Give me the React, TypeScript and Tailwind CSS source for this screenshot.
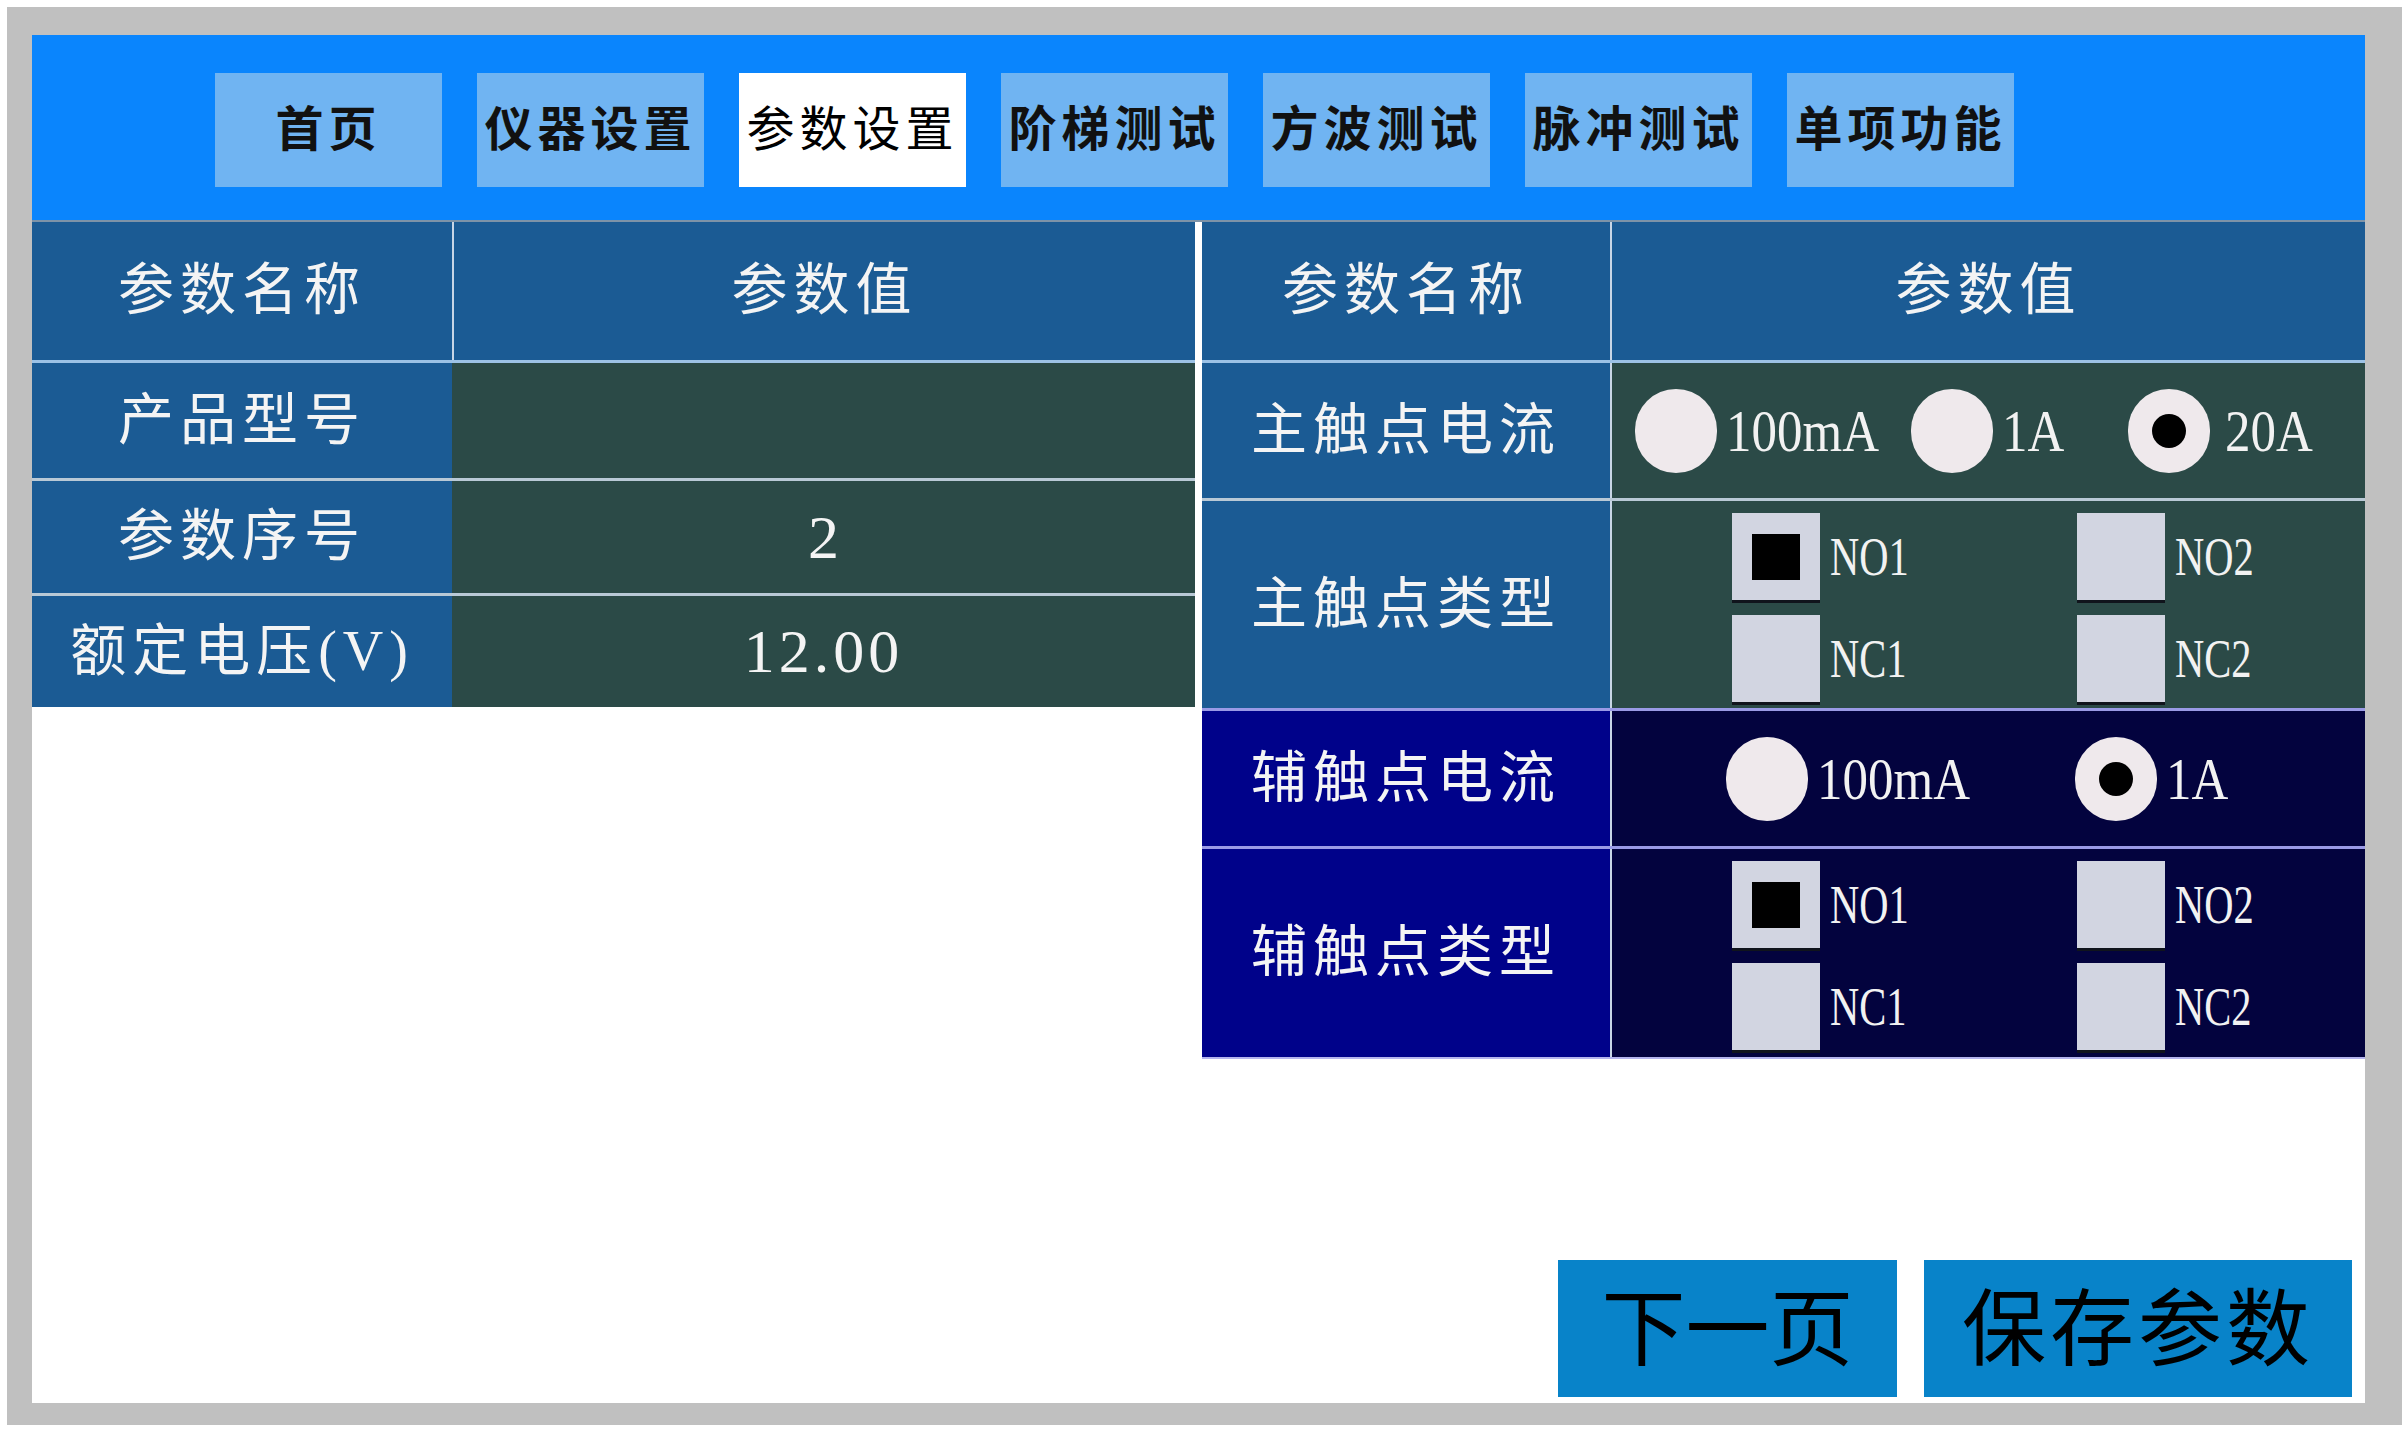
import type { ReactNode } from 'react'

const tabs = ['首页', '仪器设置', '参数设置', '阶梯测试', '方波测试', '脉冲测试', '单项功能']

function Radio({ checked }: { checked?: boolean }) {
  return (
    <span className="flex h-[84px] w-[82px] shrink-0 items-center justify-center rounded-full bg-[#efe9ec]">
      {checked && <span className="h-[34px] w-[34px] rounded-full bg-black" />}
    </span>
  )
}

function Check({ checked }: { checked?: boolean }) {
  return (
    <span className="flex h-[87px] w-[88px] shrink-0 items-center justify-center bg-[#d2d5e1] shadow-[0_3px_0_#10141c]">
      {checked && <span className="h-[46px] w-[48px] bg-black" />}
    </span>
  )
}

function Label({ children, small }: { children: ReactNode; small?: boolean }) {
  return (
    <span
      className={
        small
          ? 'ml-[10px] inline-block origin-left scale-x-[0.75] text-[54px] leading-none text-[#f2f2f2]'
          : 'ml-[9px] inline-block origin-left scale-x-[0.85] text-[60px] leading-none text-[#f2f2f2]'
      }
    >
      {children}
    </span>
  )
}

function CheckGrid() {
  return (
    <div className="grid grid-cols-[345px_345px] gap-y-[15px] pl-[120px] pt-[12px]">
      <div className="flex items-center">
        <Check checked />
        <Label small>NO1</Label>
      </div>
      <div className="flex items-center">
        <Check />
        <Label small>NO2</Label>
      </div>
      <div className="flex items-center">
        <Check />
        <Label small>NC1</Label>
      </div>
      <div className="flex items-center">
        <Check />
        <Label small>NC2</Label>
      </div>
    </div>
  )
}

function NameCell({ children, aux }: { children: ReactNode; aux?: boolean }) {
  return (
    <div
      className={
        aux
          ? 'flex items-center justify-center bg-[#00028a] pb-[2px] text-[56px] tracking-[6px] text-[#f4f4f4]'
          : 'flex items-center justify-center bg-[#1b5b94] pb-[2px] text-[56px] tracking-[6px] text-[#f4f4f4]'
      }
    >
      {children}
    </div>
  )
}

export default function App() {
  return (
    <div className="h-[1440px] w-[2402px] overflow-hidden bg-white pl-[7px] pt-[7px] font-['Liberation_Serif','Noto_Sans_CJK_SC',serif]">
      <div className="h-[1418px] w-[2395px] bg-[#c0c0c0] pl-[25px] pt-[28px]">
        <div className="flex h-[1368px] w-[2333px] flex-col bg-white">
          {/* top tab bar */}
          <div className="flex h-[185px] shrink-0 items-start gap-[35px] bg-[#0a85fd] pl-[183px] pt-[38px]">
            {tabs.map((t, i) => (
              <div
                key={t}
                className={
                  i === 2
                    ? "flex h-[114px] w-[227px] items-center justify-center bg-white pb-[10px] font-['Noto_Sans_CJK_SC',sans-serif] text-[48px] tracking-[5px] text-black"
                    : "flex h-[114px] w-[227px] items-center justify-center bg-[#70b4f2] pb-[10px] font-['Noto_Sans_CJK_SC',sans-serif] text-[48px] font-semibold tracking-[5px] text-[#111]"
                }
              >
                {t}
              </div>
            ))}
          </div>
          <div className="h-[2px] shrink-0 bg-[#7d93a8]" />

          <div className="flex items-start gap-[7px]">
            {/* left table */}
            <div className="grid w-[1163px] grid-cols-[420px_743px]">
              <NameCell>参数名称</NameCell>
              <div className="flex h-[138px] items-center justify-center border-l-2 border-[#c8d6e6] bg-[#1b5b94] pb-[2px] text-[56px] tracking-[6px] text-[#f4f4f4]">
                参数值
              </div>

              <div className="col-span-2 h-[3px] bg-[#9cc2e6]" />
              <NameCell>产品型号</NameCell>
              <div className="h-[115px] bg-[#2b4a47]" />

              <div className="col-span-2 h-[3px] bg-[#b9c9d6]" />
              <NameCell>参数序号</NameCell>
              <div className="flex h-[112px] items-center justify-center bg-[#2b4a47] text-[62px] text-[#f4f4f4]">2</div>

              <div className="col-span-2 h-[3px] bg-[#b9c9d6]" />
              <NameCell>额定电压(V)</NameCell>
              <div className="flex h-[111px] items-center justify-center bg-[#2b4a47] text-[62px] tracking-[4px] text-[#f4f4f4]">
                12.00
              </div>
            </div>

            {/* right table */}
            <div className="grid w-[1163px] grid-cols-[408px_755px]">
              <NameCell>参数名称</NameCell>
              <div className="flex h-[138px] items-center justify-center border-l-2 border-[#c8d6e6] bg-[#1b5b94] pb-[2px] text-[56px] tracking-[6px] text-[#f4f4f4]">
                参数值
              </div>

              <div className="col-span-2 h-[3px] bg-[#9cc2e6]" />
              <NameCell>主触点电流</NameCell>
              <div className="flex h-[135px] items-center border-l-2 border-[#c8d6e6] bg-[#2b4a47] pl-[23px]">
                <div className="flex w-[276px] items-center">
                  <Radio />
                  <Label>100mA</Label>
                </div>
                <div className="flex w-[217px] items-center">
                  <Radio />
                  <Label>1A</Label>
                </div>
                <div className="flex items-center">
                  <Radio checked />
                  <span className="ml-[6px]" />
                  <Label>20A</Label>
                </div>
              </div>

              <div className="col-span-2 h-[3px] bg-[#b9c9d6]" />
              <NameCell>主触点类型</NameCell>
              <div className="h-[207px] border-l-2 border-[#c8d6e6] bg-[#2b4a47]">
                <CheckGrid />
              </div>

              <div className="col-span-2 h-[3px] bg-[#9a9ae6]" />
              <NameCell aux>辅触点电流</NameCell>
              <div className="flex h-[135px] items-center border-l-2 border-[#c8d6e6] bg-[#03033e] pl-[114px]">
                <div className="flex w-[349px] items-center">
                  <Radio />
                  <Label>100mA</Label>
                </div>
                <div className="flex items-center">
                  <Radio checked />
                  <Label>1A</Label>
                </div>
              </div>

              <div className="col-span-2 h-[3px] bg-[#9a9ae6]" />
              <NameCell aux>辅触点类型</NameCell>
              <div className="h-[208px] border-l-2 border-[#c8d6e6] bg-[#03033e]">
                <CheckGrid />
              </div>
              <div className="col-span-2 h-[2px] bg-[#b4b4ee]" />
            </div>
          </div>

          {/* bottom buttons */}
          <div className="flex flex-1 items-end justify-end gap-[27px] pb-[6px] pr-[13px] font-['Noto_Sans_CJK_SC',sans-serif] text-black">
            <button className="flex h-[137px] w-[339px] items-center justify-center bg-[#0883c9] pb-[12px] text-[84px] leading-none">
              下一页
            </button>
            <button className="flex h-[137px] w-[428px] items-center justify-center bg-[#0883c9] pb-[12px] text-[84px] leading-none tracking-[4px]">
              保存参数
            </button>
          </div>
        </div>
      </div>
    </div>
  )
}
